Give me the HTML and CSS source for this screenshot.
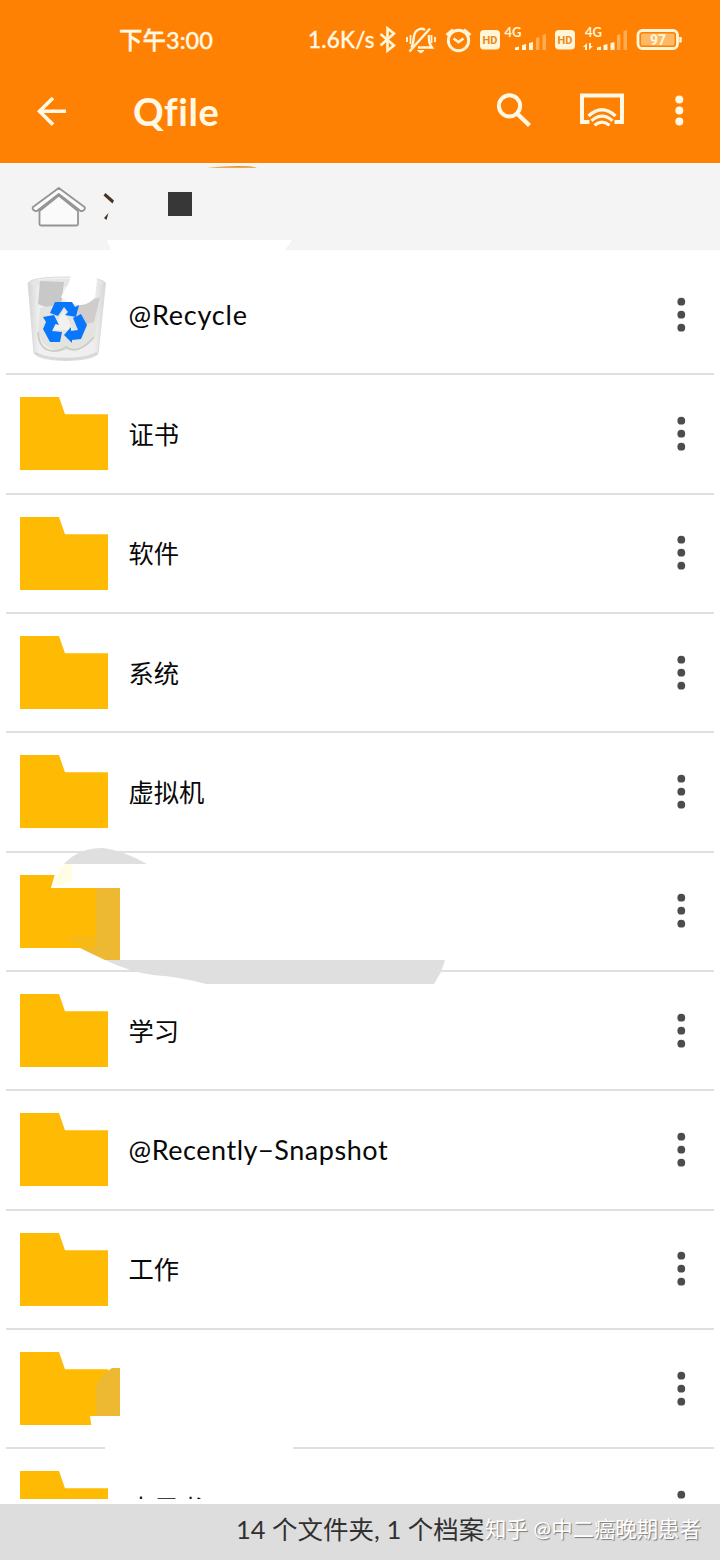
FILE: index.html
```html
<!DOCTYPE html>
<html lang="zh-CN">
<head>
<meta charset="utf-8">
<title>Qfile</title>
<link rel="stylesheet" href="styles.css">
</head>
<body>
<svg width="0" height="0" class="defs">
  <defs>
    <symbol id="folder" viewBox="0 0 88 73.3"><path d="M0 0H39L45 17.3H88V73.3H0Z" fill="#ffbb03"/></symbol>
    <symbol id="dots" viewBox="0 0 10 36"><circle cx="5.300" cy="4.700" r="3.900"/><circle cx="5.300" cy="17.700" r="3.900"/><circle cx="5.300" cy="30.700" r="3.900"/></symbol>
  </defs>
</svg>
<div class="screen">
  <header class="appbar">
    <div class="status">
      <span class="clock">下午3:00</span>
      <span class="speed">1.6K/s</span>
      <svg class="status-icons" width="308" height="40" viewBox="376 20 308 40" fill="none" stroke="#fff5d8" stroke-width="2.2">
        <path d="M380.500 34L394 45.500L387.500 50.500V28.500L394 33.500L380.500 45.500" stroke-width="2.600"/>
        <path d="M411 47.500C415 44 412 33 417 30.500C420 28.500 423 28.500 425 30M429 35C428.500 41 429 44 432 47.500H418M409.500 51.500L430 28.500" stroke-width="2.400"/>
        <path d="M417.500 50.500H424L421 53Z" fill="#fff5d8" stroke-width="1"/>
        <path d="M407 37V42M410.500 35V44M431.500 35V43M435 37V42" stroke-width="1.800"/>
        <circle cx="458.500" cy="40.500" r="10.200" stroke-width="2.900"/>
        <path d="M453.500 38.500L458.500 42L463.500 38.500M446.500 35L453 29.500M464 29.500L470.500 35" stroke-width="2.700"/>
        <g stroke="none" fill="#fff5d8">
          <rect x="480" y="30" width="20" height="19.500" rx="4"/>
          <rect x="555" y="30" width="20" height="19.500" rx="4"/>
          <text class="hd" x="490" y="44" text-anchor="middle">HD</text>
          <text class="hd" x="565" y="44" text-anchor="middle">HD</text>
          <text class="net" x="504.500" y="36.700">4G</text>
          <text class="net" x="585" y="36.700">4G</text>
          <path d="M515 50V47.500L519 46.500V50ZM522 50V45L526 44V50ZM529 50V43L533 42V50ZM597 50V47.500L601 46.500V50ZM603.500 50V45L607.500 44V50ZM610.500 50V43L614.500 42V50Z"/>
          <path d="M536 50V38L539.500 37V50ZM542.500 50V35L546 34V50ZM617 50V35L620.500 34V50ZM623.500 50V31L627 30V50Z" opacity=".38"/>
          <path d="M583 47L587 43V50H585V47ZM589 43H591V46H593L589 50Z"/>
        </g>
        <rect x="638" y="30.500" width="39.500" height="18" rx="4.500" stroke-width="2.800"/>
        <rect x="641" y="33.500" width="33.500" height="12" rx="1.500" fill="#ffb964" stroke="none"/>
        <path d="M680.500 37V42.500" stroke-width="2.500"/>
        <text class="bat" x="658" y="44.800" text-anchor="middle" fill="#fff8df" stroke="none">97</text>
      </svg>
    </div>
    <div class="toolbar">
      <svg class="back" width="34" height="34" viewBox="34 94 34 34" fill="none" stroke="#fff8e5" stroke-width="3.600"><path d="M66 111.300H39.500M53 98L39.500 111.300L53 124.600"/></svg>
      <h1 class="title">Qfile</h1>
      <svg width="200" height="44" viewBox="490 90 200 44" fill="none" stroke="#fff8e5">
        <circle cx="509.500" cy="106.800" r="10.600" stroke-width="4"/>
        <path d="M516.500 114L529.500 126.500" stroke-width="4.400"/>
        <path d="M589.500 123H582V96.500H622V123H614.500" stroke-width="4"/>
        <path d="M588.500 117Q602 104.500 615.500 117M591.500 121.800Q602 112.500 612.500 121.800M594.500 126.200Q602 120 609.500 126.200" stroke-width="3.200"/>
        <g fill="#fff8e5" stroke="none"><circle cx="679.300" cy="100.500" r="4"/><circle cx="679.300" cy="111.500" r="4"/><circle cx="679.300" cy="122.500" r="4"/></g>
      </svg>
    </div>
  </header>
  <nav class="crumbs">
    <svg width="720" height="87" viewBox="0 163 720 87">
      <path d="M0 163H720V164H0Z" fill="#fff7e8"/>
      <path d="M207 167.800Q245 164.300 257 167.800Z" fill="#ee901e"/>
      <path d="M39.500 211V224Q39.500 225.500 41 225.500H76.500Q78 225.500 78 224V211L58.800 195.500Z" fill="#fafafa" stroke="#949494" stroke-width="1.800"/>
      <path d="M58.800 188L84.500 207Q85.500 208 84.500 209.500L82.500 211Q81 211.500 80 210.500L58.800 194L37.500 210.500Q36.500 211.500 35 211L33 209.500Q32 208 33 207Z" fill="#fbfbfb" stroke="#949494" stroke-width="1.800" stroke-linejoin="round"/>
      <path d="M105.500 193L114 200.500L112.500 203.500L103.500 195.500ZM108.500 213L106.500 220L104 218Z" fill="#4a3320"/>
      <rect x="168" y="192" width="24" height="24" fill="#373737"/>
      <path d="M107 240H292L285 250H111Z" fill="#fff"/>
    </svg>
  </nav>
  <main class="list">
    <div class="row">
      <div class="icon"><svg class="bin" width="88" height="90" viewBox="20 273 88 90">
        <defs><linearGradient id="glass"><stop stop-color="#d4d4d4"/><stop offset=".14" stop-color="#f0f0f0"/><stop offset=".85" stop-color="#efefef"/><stop offset="1" stop-color="#d6d6d6"/></linearGradient></defs>
        <path d="M28 283L34 353Q38 360 66 360.500Q92 360 98 354L105.500 283Q102 277 66 277Q32 277 28 283Z" fill="url(#glass)" stroke="#dcdcdc" stroke-width="1"/>
        <path d="M30 283Q34 279 66 279Q99 279 103.500 283Q98 287 66 287Q34 287 30 283Z" fill="#e6e6e6"/>
        <path d="M40 281L64 282L61 307Q48 309 38 304Z" fill="#c8c8c8"/>
        <path d="M40 308L61 304L100 297L95 337Q86 351 66 350Q42 352 38 332Z" fill="#e3e3df"/>
        <path d="M78 306L100 297L94 322L77 327Z" fill="#cfcccb"/>
        <path d="M38 332Q39 351 54 351Q61 351 66 347Q78 356 94 337" fill="none" stroke="#cbcdc6" stroke-width="1.800"/>
        <path d="M35 353Q47 359 66 359Q86 359 97 353" fill="none" stroke="#cdcdcd" stroke-width="2.500" opacity=".7"/>
        <path d="M71 274H95L97 280L95 297Q89 305 80 305Q68 304 61 297L69 283Z" fill="#fff"/>
        <path d="M64 310L73 330L52 330Z" fill="#f1f1ee"/>
        <g fill="#0877fb">
          <path d="M55 302H72L75 307L79 305L76 317L65 315L68 312L64 307L58 316L50 313Z"/>
          <path d="M43 317L54 315L59 325L55.500 324L52 331L62 332L60 342H50L43 329L46 322Z"/>
          <path d="M73 318L81 314L87 325L81 339L72 340V343L64 335L71 327V331L78 330Z"/>
        </g>
      </svg></div>
      <span class="name latin1">@Recycle</span>
      <svg class="more"><use href="#dots"/></svg>
    </div>
    <div class="row"><div class="icon"><svg class="folder"><use href="#folder"/></svg></div><span class="name">证书</span><svg class="more"><use href="#dots"/></svg></div>
    <div class="row"><div class="icon"><svg class="folder"><use href="#folder"/></svg></div><span class="name">软件</span><svg class="more"><use href="#dots"/></svg></div>
    <div class="row"><div class="icon"><svg class="folder"><use href="#folder"/></svg></div><span class="name">系统</span><svg class="more"><use href="#dots"/></svg></div>
    <div class="row"><div class="icon"><svg class="folder"><use href="#folder"/></svg></div><span class="name">虚拟机</span><svg class="more"><use href="#dots"/></svg></div>
    <div class="row"><div class="icon"><svg class="folder"><use href="#folder"/></svg></div><span class="name"></span><svg class="more"><use href="#dots"/></svg>
      <svg class="scribble" width="460" height="146" viewBox="0 844 460 146">
        <path d="M64 864Q78 848 103 848Q122 850 147 864Z" fill="#dfdfdf"/>
        <path d="M56 870H120V888H51Z" fill="#fff"/>
        <path d="M51 888H97V900H51Z" fill="#ffbb03"/>
        <path d="M64 864H72V882L53 887Q57 871 64 864Z" fill="#fffee4"/>
        <path d="M66 936H96V948H80Z" fill="#f8b914"/>
        <path d="M96 888H120V960H105Q92 954 80 948H96Z" fill="#edb933"/>
        <path d="M105 960H445L441 972L434 984H206Q181 977 153 975Q130 972 105 960Z" fill="#dfdfdf"/>
      </svg>
    </div>
    <div class="row"><div class="icon"><svg class="folder"><use href="#folder"/></svg></div><span class="name">学习</span><svg class="more"><use href="#dots"/></svg></div>
    <div class="row"><div class="icon"><svg class="folder"><use href="#folder"/></svg></div><span class="name latin2">@Recently−Snapshot</span><svg class="more"><use href="#dots"/></svg></div>
    <div class="row"><div class="icon"><svg class="folder"><use href="#folder"/></svg></div><span class="name">工作</span><svg class="more"><use href="#dots"/></svg></div>
    <div class="row"><div class="icon"><svg class="folder"><use href="#folder"/></svg></div><span class="name"></span><svg class="more"><use href="#dots"/></svg>
      <svg class="scribble low" width="300" height="92" viewBox="0 1362 300 92">
        <path d="M90 1416H120V1430H92Z" fill="#fff"/>
        <path d="M96 1386Q101 1374 112 1368H120V1416H96Z" fill="#edb933"/>
        <path d="M105 1444H293V1454H105Z" fill="#fff"/>
      </svg>
    </div>
    <div class="row"><div class="icon"><svg class="folder"><use href="#folder"/></svg></div><span class="name">电子书</span><svg class="more"><use href="#dots"/></svg></div>
  </main>
  <footer class="footer"><span class="summary">14 个文件夹, 1 个档案</span><span class="watermark">知乎 @中二癌晚期患者</span></footer>
</div>
</body>
</html>
```

FILE: styles.css
```css
* { box-sizing: border-box; }
body {
  margin: 0;
  background: #fff;
  font-family: Lato, "Noto Sans CJK SC", sans-serif;
}
.defs { position: absolute; }
.screen {
  width: 720px;
  height: 1560px;
  display: flex;
  flex-direction: column;
  overflow: hidden;
}
.appbar { height: 163px; flex: none; background: #ff8103; color: #fff8e5; }
.status { height: 80px; display: flex; align-items: center; padding-left: 119px; white-space: nowrap; }
.clock { width: 189px; font-size: 23.5px; line-height: 30px; font-weight: 500; -webkit-text-stroke: .3px currentColor; }
.speed { width: 68px; font-size: 22.5px; line-height: 30px; font-weight: 500; letter-spacing: .2px; -webkit-text-stroke: .3px currentColor; }
.status-icons { flex: none; }
.hd { font: bold 11px Roboto, sans-serif; fill: #e88a20; }
.net { font: bold 13px Lato, sans-serif; }
.bat { font: bold 14px Roboto, sans-serif; }
.toolbar { height: 62px; display: flex; align-items: center; padding-left: 34px; }
.title { width: 357px; margin: 0 0 0 65px; font-size: 38px; line-height: 44px; font-weight: 700; letter-spacing: .6px; font-variant-ligatures: none; }
.crumbs { height: 87px; flex: none; background: #f4f4f4; }
.crumbs svg { display: block; }
.list { height: 1249px; flex: none; padding: 6px 6px 0; overflow: hidden; }
.row {
  position: relative;
  height: 119.35px;
  display: flex;
  align-items: center;
  padding: 0 28px 0 14px;
  border-bottom: 2px solid #dfdfdf;
}
.icon { width: 88px; flex: none; }
.icon svg { display: block; }
.bin { margin-top: 6px; }
.folder { width: 88px; height: 73.3px; }
.name { flex: 1; margin: 0 0 0 20.5px; color: #080808; font-size: 25.3px; line-height: 36px; white-space: nowrap; }
.latin1 { font-size: 27px; letter-spacing: .8px; }
.latin2 { font-size: 27px; letter-spacing: .55px; }
.more { width: 10px; height: 36px; fill: #4c4c4c; }
.scribble { position: absolute; left: -6px; top: -8.5px; }
.scribble.low { top: 32px; }
.footer {
  height: 56px;
  margin-top: 5px;
  flex: none;
  display: flex;
  align-items: center;
  padding: 0 0 6px 236px;
  background: #ddd;
  white-space: nowrap;
}
.summary { width: 249px; color: #303030; font-size: 25.5px; line-height: 36px; }
.watermark { color: #fff; font-size: 21.4px; line-height: 30px; text-shadow: 1px 1px 1px #777; }
```
